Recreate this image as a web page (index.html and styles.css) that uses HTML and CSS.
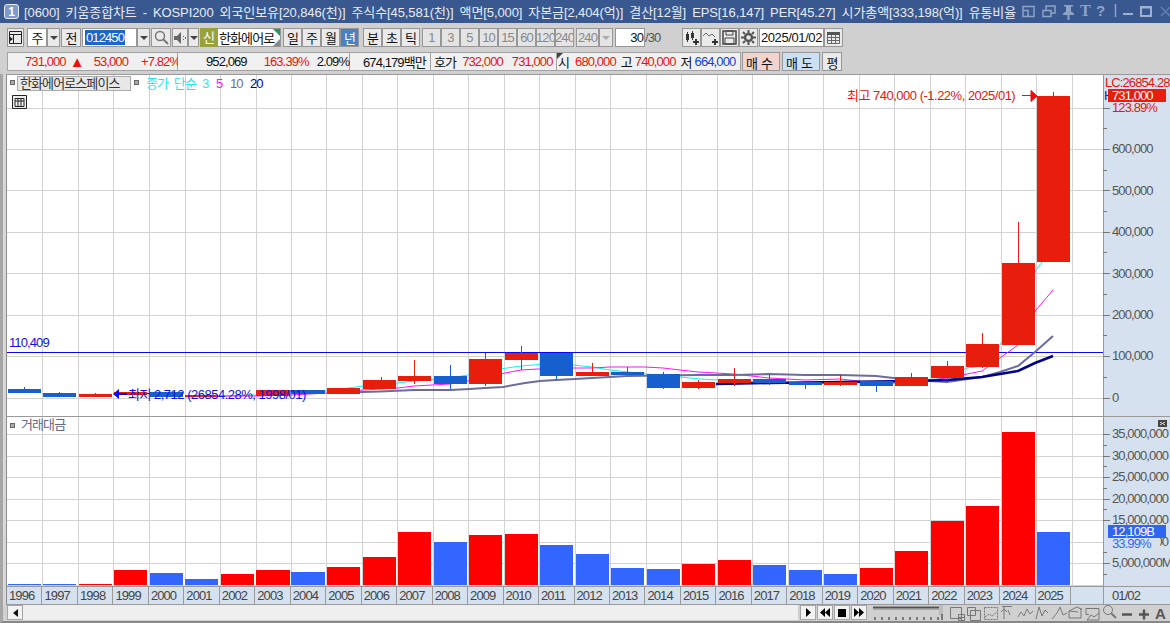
FILE: index.html
```html
<!DOCTYPE html>
<html lang="ko">
<head>
    <meta charset="UTF-8">
    <title>키움종합차트</title>
    <link rel="stylesheet" href="styles.css">
</head>
<body>
<div class="titlebar">
    <span class="appicon">1</span>
    <div class="titletext">[0600] 키움종합차트 - KOSPI200 외국인보유[20,846(천)] 주식수[45,581(천)] 액면[5,000] 자본금[2,404(억)] 결산[12월] EPS[16,147] PER[45.27] 시가총액[333,198(억)] 유통비율</div>
    <svg class="winbtns" width="150" height="23" viewBox="1020 0 150 23">
        <path class="wb" d="M1023 6.500h11v10h-11zM1023 10.500h5v6M1043 10.500h8v6h-8zM1046 10v-4h9v7h-4"/>
        <path class="wbf" d="M1064 5h9v1.500h-2v5l3 2v1.500h-4.500v5h-2v-5h-4.500v-1.500l3-2v-5h-2z"/>
        <text class="wbt" x="1080" y="16">T</text>
        <text class="wbq" x="1096" y="16">?</text>
        <path class="wb" d="M1115.500 4v13"/>
        <path class="wb2" d="M1123 14h10M1141 7h10v9h-10zM1141 7.500h10"/>
        <path class="wb3" d="M1161 7l9 9M1170 7l-9 9"/>
    </svg>
</div>

<div class="toolbar">
    <button class="btn w17 ml7"><svg width="13" height="13" viewBox="0 0 13 13"><path d="M.5.500h12v12H.5zM.5 3.500h12M4.500 3.500v9" fill="none" stroke="#222"/><path d="M0 5l4 3-4 3z" fill="#222"/></svg></button>
    <span class="field w20 ml3 center">주</span>
    <button class="btn w13"><i class="down"></i></button>
    <button class="btn w20 ml1">전</button>
    <span class="field code ml1"><b>012450</b></span>
    <button class="btn w13"><i class="down"></i></button>
    <button class="btn w20 ml1"><svg width="15" height="15" viewBox="0 0 15 15"><circle cx="6" cy="6" r="4.500" fill="none" stroke="#777" stroke-width="1.500"/><path d="M9 9l5 5" stroke="#777" stroke-width="2"/></svg></button>
    <button class="btn w16 ml1"><svg width="12" height="12" viewBox="0 0 12 12"><path d="M0 4h3l4-4v12l-4-4H0z" fill="#666"/><path d="M9 4h1v1H9zM9 7h1v1H9zM11 5h1v2h-1z" fill="#666"/></svg></button>
    <button class="btn w11"><i class="down"></i></button>
    <span class="sin ml1">신</span>
    <span class="field name">한화에어로<i class="corner-g"></i><i class="corner-k"></i></span>
    <button class="btn w19 ml2">일</button>
    <button class="btn w19">주</button>
    <button class="btn w19">월</button>
    <button class="btn w19 on">년</button>
    <button class="btn w19 ml4">분</button>
    <button class="btn w19">초</button>
    <button class="btn w19">틱</button>
    <button class="btn w19 ml2 off">1</button>
    <button class="btn w19 off">3</button>
    <button class="btn w19 off">5</button>
    <button class="btn w19 off">10</button>
    <button class="btn w19 off">15</button>
    <button class="btn w19 off">60</button>
    <button class="btn w19 off">120</button>
    <button class="btn w19 off">240</button>
    <span class="field fld240 ml2 off">240</span>
    <button class="btn w14 off"><i class="down pale"></i></button>
    <span class="field cnt ml2">30</span>
    <span class="cnt2">/30</span>
    <button class="btn w19 ml17"><svg width="15" height="14" viewBox="0 0 15 14"><path d="M2 3h3v6H2zM7 2h3v5H7z" fill="#333"/><path d="M3.500 1v10M8.500 0v9" stroke="#333"/><path d="M12 8v6M9 11h6" stroke="#333" stroke-width="2"/></svg></button>
    <button class="btn w19"><svg width="15" height="14" viewBox="0 0 15 14"><path d="M0 5l3-3 3 3 3-2 3 3" fill="none" stroke="#666"/><path d="M12 8v6M9 11h6" stroke="#333" stroke-width="2"/></svg></button>
    <button class="btn w19"><svg width="15" height="15" viewBox="0 0 15 15"><path d="M1 1h13v13H1z" fill="none" stroke="#444" stroke-width="1.500"/><path d="M4 1h7v4H4zM3 8h9v6H3z" fill="none" stroke="#444"/></svg></button>
    <button class="btn w19"><svg width="15" height="15" viewBox="0 0 15 15"><circle cx="7.500" cy="7.500" r="3.500" fill="none" stroke="#555" stroke-width="2.500"/><path d="M7.500 0v3M7.500 12v3M0 7.500h3M12 7.500h3M2 2l2 2M11 11l2 2M13 2l-2 2M4 11l-2 2" stroke="#555" stroke-width="2"/></svg></button>
    <span class="field date ml1">2025/01/02</span>
    <button class="btn w19"><svg width="13" height="12" viewBox="0 0 13 12"><path d="M.5 2.500h12v9H.5zM.5 5.500h12M.5 8.500h12M4.500 3v8M8.500 3v8" fill="none" stroke="#666"/><path d="M0 0h13v3H0z" fill="#555"/></svg></button>
</div>

<div class="quotes">
    <div class="cell c1"><span class="red">731,000</span><span class="red tri">▲</span><span class="red m10">53,000</span><span class="red m13">+7.82%</span></div>
    <div class="cell c2"><span>952,069</span><span class="red m17">163.39%</span><span class="m8">2.09%</span></div>
    <div class="cell c3"><span>674,179백만</span></div>
    <div class="cell c4"><span>호가</span><span class="red m6">732,000</span><span class="red m9">731,000</span></div>
    <div class="cell c5"><i class="mark"></i><span>시</span><span class="red m6">680,000</span><span class="m5">고</span><span class="red m3">740,000</span><span class="m5">저</span><span class="blue m3">664,000</span></div>
    <button class="order buy">매수</button>
    <button class="order sell">매도</button>
    <button class="order flat">평</button>
</div>

<div class="chart">
    <div class="plots">
        <svg class="panel main" width="1096" height="342" viewBox="7 74 1096 342">
            <path class="grid" d="M42.500 74v342M78.500 74v342M113.500 74v342M149.500 74v342M185.500 74v342M220.500 74v342M256.500 74v342M291.500 74v342M326.500 74v342M362.500 74v342M397.500 74v342M433.500 74v342M468.500 74v342M504.500 74v342M539.500 74v342M575.500 74v342M610.500 74v342M646.500 74v342M681.500 74v342M717.500 74v342M752.500 74v342M788.500 74v342M823.500 74v342M859.500 74v342M894.500 74v342M930.500 74v342M965.500 74v342M1001.500 74v342M1036.500 74v342M1072.500 74v342"/>
            <path class="grid" d="M7 108.500h1096M7 149.500h1096M7 190.500h1096M7 232.500h1096M7 273.500h1096M7 315.500h1096M7 356.500h1096M7 398.500h1096"/>
            <path class="frame" d="M7 74.500h1096"/>
            <path class="hline" d="M7 352.500h1096"/>
            <text class="t blue" x="9" y="347">110,409</text>
            <polyline class="ma3" points="185,397 220,396 256,395 291,393 327,391 363,386 398,383 414,381 450,378 485,372 500,369 521,366 545,364 573,365 592,367 610,370 646,374 680,377 700,379 734,381 769,382 805,383 840,383 876,383 911,381 947,378 967,368 990,365 1000,345 1018,310 1036,270 1042,262"/>
            <polyline class="ma5" points="220,396 256,396 291,395 327,393 363,390 398,388 414,386 450,384 485,378 505,373 521,370 556,368 592,368 610,367 645,367 663,368 680,370 698,372 734,374 769,378 805,380 840,379 876,383 911,383 947,378 982,371 1018,345 1036,310 1053,290"/>
            <polyline class="ma10" points="343,393 362,392 380,391.500 414,390 450,390 470,389 485,388 503,387 525,383 540,381 556,380 575,379 592,378 627,376 663,375.500 698,375 734,375 769,374 805,375 840,375 876,376 911,380 947,382 982,377 1000,372 1018,366 1035,352 1053,336"/>
            <polyline class="ma20" points="716,384 769,383 805,382.500 840,382 876,381.500 911,381 947,380 982,377 1000,374 1018,371 1035,363 1053,356"/>
            <path class="wick-r" d="M95.500 393v1M414.500 360v24M485.500 353v33M521.500 346v24M592.500 363v13M698.500 380v9M734.500 368v18M840.500 375v11M911.500 373v5M947.500 361v19M982.500 333v35M1018.500 222v42M1053.500 92v5M381.500 377v4"/>
            <path class="wick-b" d="M24.500 387v3M59.500 392v2M450.500 365v24M556.500 375v4M627.500 367v6M663.500 372v17M769.500 375v10M805.500 384v5M876.500 385v7"/>
            <path class="body-b" d="M8 389h33v4h-33zM43 393h33v4h-33zM150 392h33v5h-33zM291 390h34v4h-34zM434 376h33v8h-33zM540 353h33v23h-33zM611 372h33v3h-33zM647 374h33v14h-33zM753 379h33v4h-33zM789 382h33v3h-33zM860 381h33v5h-33z"/>
            <path class="body-r" d="M79 394h33v3h-33zM114 392h33v3h-33zM185 395h33v2h-33zM256 390h34v6h-34zM327 388h33v6h-33zM363 380h33v9h-33zM398 376h33v5h-33zM469 359h33v25h-33zM505 353h33v7h-33zM576 372h33v4h-33zM682 382h33v6h-33zM718 379h33v4h-33zM824 382h33v3h-33zM895 377h33v9h-33zM931 366h33v12h-33zM966 344h33v23h-33zM1002 263h33v82h-33zM1037 96h33v166h-33z"/>
            <path class="low" d="M113 394l6-5v4h8v2h-8v4z"/>
            <text class="t ann blue" x="128" y="399">최저 2,712 (26854.28%, 1998/01)</text>
            <text class="t ann red" x="847" y="100">최고 740,000 (-1.22%, 2025/01)</text>
            <path class="hi" d="M1022 95.500h9M1037 96l-6-5.500v11z"/>
            <rect class="dot" x="10.500" y="80.500" width="4" height="4"/>
            <rect class="legend-box" x="17.500" y="76.500" width="113" height="14"/>
            <text class="t dark" x="20" y="88">한화에어로스페이스</text>
            <rect class="dot" x="134.500" y="80.500" width="4" height="4"/>
            <text class="t cyan" x="146" y="88">종가 단순</text>
            <text class="t cyan" x="202" y="88">3</text>
            <text class="t magenta" x="216" y="88">5</text>
            <text class="t slate" x="230" y="88">10</text>
            <text class="t navy" x="250" y="88">20</text>
            <path class="tbl" d="M12.500 95.500h14v13h-14zM15 98.500h9v8h-9zM18 98v8M21 98v8M15 101h9"/>
        </svg>
        <svg class="panel vol" width="1096" height="170" viewBox="7 416 1096 170">
            <path class="grid" d="M42.500 416v170M78.500 416v170M113.500 416v170M149.500 416v170M185.500 416v170M220.500 416v170M256.500 416v170M291.500 416v170M326.500 416v170M362.500 416v170M397.500 416v170M433.500 416v170M468.500 416v170M504.500 416v170M539.500 416v170M575.500 416v170M610.500 416v170M646.500 416v170M681.500 416v170M717.500 416v170M752.500 416v170M788.500 416v170M823.500 416v170M859.500 416v170M894.500 416v170M930.500 416v170M965.500 416v170M1001.500 416v170M1036.500 416v170M1072.500 416v170"/>
            <path class="grid" d="M7 434.500h1096M7 456.500h1096M7 477.500h1096M7 499.500h1096M7 520.500h1096M7 542.500h1096M7 563.500h1096M7 585.500h1096"/>
            <path class="frame" d="M7 416.500h1096"/>
            <path class="vb" d="M8 584h33v1h-33zM43 584h33v1h-33zM150 573h33v12h-33zM185 579h33v6h-33zM291 572h34v13h-34zM434 542h33v43h-33zM540 545h33v40h-33zM576 554h33v31h-33zM611 568h33v17h-33zM647 569h33v16h-33zM753 565h33v20h-33zM789 570h33v15h-33zM824 574h33v11h-33zM1037 532h33v53h-33z"/>
            <path class="vr" d="M79 584h33v1h-33zM114 570h33v15h-33zM221 574h33v11h-33zM256 570h34v15h-34zM327 567h33v18h-33zM363 557h33v28h-33zM398 532h33v53h-33zM469 535h33v50h-33zM505 534h33v51h-33zM682 564h33v21h-33zM718 560h33v25h-33zM860 568h33v17h-33zM895 551h33v34h-33zM931 521h33v64h-33zM966 506h33v79h-33zM1002 432h33v153h-33z"/>
            <rect class="dot" x="10.500" y="423.500" width="4" height="4"/>
            <text class="t vol-name" x="21" y="429">거래대금</text>
        </svg>
        <div class="years">
            <span>1996</span><span>1997</span><span>1998</span><span>1999</span><span>2000</span><span>2001</span><span>2002</span><span>2003</span><span>2004</span><span>2005</span><span>2006</span><span>2007</span><span>2008</span><span>2009</span><span>2010</span><span>2011</span><span>2012</span><span>2013</span><span>2014</span><span>2015</span><span>2016</span><span>2017</span><span>2018</span><span>2019</span><span>2020</span><span>2021</span><span>2022</span><span>2023</span><span>2024</span><span>2025</span><span></span>
        </div>
    </div>
    <div class="axis">
        <svg class="panel" width="67" height="342" viewBox="1103 74 67 342">
            <path class="frame" d="M1103 74.500h67M1103.500 74v342"/>
            <path class="tick" d="M1103 108.500h7M1103 149.500h7M1103 190.500h7M1103 232.500h7M1103 273.500h7M1103 315.500h7M1103 356.500h7M1103 398.500h7M1103 128.500h4M1103 170.500h4M1103 211.500h4M1103 252.500h4M1103 294.500h4M1103 335.500h4M1103 377.500h4"/>
            <text class="t gray" x="1112" y="153">600,000</text>
            <text class="t gray" x="1112" y="195">500,000</text>
            <text class="t gray" x="1112" y="236">400,000</text>
            <text class="t gray" x="1112" y="278">300,000</text>
            <text class="t gray" x="1112" y="319">200,000</text>
            <text class="t gray" x="1112" y="360">100,000</text>
            <text class="t gray" x="1112" y="402">0</text>
            <text class="t red" x="1105" y="87">LC:26854.28</text>
            <text class="t blue" x="1104" y="100">H</text>
            <rect class="tag-r" x="1108" y="89" width="58" height="13"/>
            <text class="t white" x="1112" y="100">731,000</text>
            <text class="t red" x="1112" y="112">123.89%</text>
        </svg>
        <svg class="panel" width="67" height="170" viewBox="1103 416 67 170">
            <path class="frame" d="M1103 416.500h67M1103.500 416v170"/>
            <path class="tick" d="M1103 434.500h7M1103 456.500h7M1103 477.500h7M1103 499.500h7M1103 520.500h7M1103 563.500h7M1103 445.500h4M1103 466.500h4M1103 488.500h4M1103 509.500h4M1103 552.500h4M1103 574.500h4"/>
            <path class="xbox" d="M1158 420h9v7h-9z"/>
            <path class="xmark" d="M1160 422l5 3M1165 422l-5 3"/>
            <text class="t gray" x="1112" y="438">35,000,000</text>
            <text class="t gray" x="1112" y="460">30,000,000</text>
            <text class="t gray" x="1112" y="481">25,000,000</text>
            <text class="t gray" x="1112" y="503">20,000,000</text>
            <text class="t gray" x="1112" y="524">15,000,000</text>
            <text class="t gray" x="1112" y="546">10,000,000</text>
            <rect class="tag-b" x="1108" y="525" width="58" height="13"/>
            <rect class="tag-mask" x="1108" y="538" width="52" height="9"/>
            <text class="t white" x="1112" y="536">12,109B</text>
            <text class="t vblue" x="1112" y="548">33.99%</text>
            <text class="t gray" x="1112" y="567">5,000,000M</text>
        </svg>
        <div class="axis-date">01/02</div>
    </div>
</div>

<div class="bottom">
    <button class="bbtn w16 ml4"><i class="left"></i></button>
    <div class="track"></div>
    <button class="bbtn w16 ml2"><svg width="8" height="9" viewBox="0 0 8 9"><path d="M2 0l5 4.500-5 4.500z"/></svg></button>
    <button class="bbtn w16 ml1"><svg width="10" height="9" viewBox="0 0 10 9"><path d="M5 0L0 4.500 5 9zM10 0L5 4.500 10 9z"/></svg></button>
    <button class="bbtn w16 ml1"><svg width="8" height="8" viewBox="0 0 8 8"><path d="M0 0h8v8H0z"/></svg></button>
    <button class="bbtn w16 ml1"><svg width="10" height="9" viewBox="0 0 10 9"><path d="M0 0l5 4.500L0 9zM5 0l5 4.500L5 9z"/></svg></button>
    <svg class="slider" width="72" height="16" viewBox="0 0 72 16"><path d="M0 2.500h68" stroke="#555" stroke-width="2"/><path d="M0 4.500h68" stroke="#aaa"/><path d="M66 0h4v10h-4z" fill="#bbb"/><path d="M2 12v3M9 12v3M16 12v3M23 12v3M30 12v3M37 12v3M44 12v3M51 12v3M58 12v3M65 12v3M69 9v6" stroke="#222"/></svg>
    <svg class="tools" width="220" height="16" viewBox="950 605 220 16">
        <g class="ti">
            <path d="M950.500 607.500h11v11h-11zM958.500 614.500h6v6h-6zM961.500 614v6M958 617.500h6"/>
            <path d="M967.500 607.500h8v8h-8zM970.500 610.500h10v10h-10z"/>
            <path stroke-dasharray="2 1" d="M984.500 607.500h13v12h-13zM985 617l4-3 3 2 5-4"/>
            <path d="M1002 606.500h10M1004 606v13M1004 609l-3 3M1004 609l3 3M1010 615l-2-5"/>
            <path d="M1018 617l3-5 3 4 3-7 3 5 3-3"/>
            <path d="M1036 619l3-12 3 9 3-6 3 3"/>
            <path d="M1052 619l5-6 3-6 3 8 4-2"/>
            <path d="M1069 611l8-4 4 2v9h-12zM1069 611l9 1M1081 610v-2"/>
            <path d="M1086 608.500h13v5M1086 608.500v6h3M1087 620l4-5 3 2 5-4v7h-12z"/>
            <circle cx="1108" cy="610" r="4.500"/>
            <path d="M1111 613l5 5" stroke-width="2"/>
            <path d="M1122 614.500h10M1139 614.500h10M1144 609.500v10" stroke="#555" stroke-width="2.500"/>
        </g>
        <text class="a" x="1155" y="619">A</text>
    </svg>
</div>
</body>
</html>
```

FILE: styles.css
```css
html, body {
    margin: 0;
    padding: 0;
    width: 1170px;
    height: 623px;
    overflow: hidden;
    background: #d0d0d0;
    font-family: "Liberation Sans", "Noto Sans CJK KR", sans-serif;
    font-size: 13px;
    letter-spacing: -.9px;
    color: #111;
}

button {
    font: inherit;
    letter-spacing: inherit;
    color: inherit;
    padding: 0;
    margin: 0;
}

/* title bar */
.titlebar {
    display: flex;
    align-items: center;
    height: 23px;
    background: #3a5890;
    color: #e6ebf4;
}

.appicon {
    display: flex;
    align-items: center;
    justify-content: center;
    box-sizing: border-box;
    width: 15px;
    height: 15px;
    margin-left: 4px;
    border: 1px solid #e6ebf4;
    border-radius: 3px;
    background: #7d9ccc;
    color: #fff;
    font-size: 12px;
    font-weight: bold;
    letter-spacing: 0;
}

.titletext {
    width: 993px;
    margin-left: 5px;
    white-space: nowrap;
    overflow: hidden;
    word-spacing: 2.500px;
    letter-spacing: -.1px;
}

.winbtns { flex: none; margin-left: 3px; }
.wb { fill: none; stroke: #8ea3c8; stroke-width: 1.500; }
.wb2 { fill: none; stroke: #9fb1d2; stroke-width: 2; }
.wb3 { fill: none; stroke: #667fae; stroke-width: 1.500; }
.wbf { fill: #8ea3c8; }
.wbt, .wbq { fill: #8ea3c8; font-family: "Liberation Serif", serif; font-size: 16px; font-weight: bold; }
.wbq { font-family: "Liberation Sans", sans-serif; font-size: 15px; }

/* toolbar */
.toolbar {
    display: flex;
    height: 19px;
    margin-top: 5px;
}

.btn {
    display: flex;
    flex: none;
    align-items: center;
    justify-content: center;
    box-sizing: border-box;
    height: 19px;
    border: 1px solid #979797;
    background: #eaeaea;
    white-space: nowrap;
    overflow: hidden;
}

.btn.on { background: #4a80c4; color: #fff; }
.btn.off { color: #888; background: #e4e4e4; }

.field {
    display: flex;
    flex: none;
    align-items: center;
    box-sizing: border-box;
    height: 19px;
    border: 1px solid #979797;
    background: #fff;
    position: relative;
}

.field.off { background: #e4e4e4; color: #888; justify-content: center; }
.center { justify-content: center; }
.code { width: 55px; padding-left: 2px; }
.code b { font-weight: normal; background: #1a66cc; color: #fff; padding: 0 1px; }
.name { width: 64px; padding-left: 1px; overflow: hidden; white-space: nowrap; }
.fld240 { width: 23px; }
.cnt { width: 30px; justify-content: flex-end; padding-right: 1px; }
.cnt2 { width: 20px; line-height: 19px; color: #555; }
.date { width: 65px; justify-content: center; letter-spacing: -.4px; }

.sin {
    flex: none;
    width: 17px;
    height: 19px;
    background: #98a13c;
    color: #fff;
    text-align: center;
    line-height: 19px;
}

.corner-g, .corner-k {
    position: absolute;
    right: 0;
    width: 0;
    height: 0;
    border-style: solid;
}
.corner-g { top: 0; border-width: 0 7px 7px 0; border-color: transparent #1f9a58 transparent transparent; }
.corner-k { bottom: 0; border-width: 0 0 7px 7px; border-color: transparent transparent #888 transparent; }

.down {
    display: block;
    width: 0;
    height: 0;
    border-left: 4px solid transparent;
    border-right: 4px solid transparent;
    border-top: 4px solid #444;
}
.down.pale { border-top-color: #aaa; }

.w11 { width: 11px; }
.w13 { width: 13px; }
.w14 { width: 14px; }
.w16 { width: 16px; }
.w17 { width: 17px; }
.w19 { width: 19px; }
.w20 { width: 20px; }
.ml1 { margin-left: 1px; }
.ml2 { margin-left: 2px; }
.ml3 { margin-left: 3px; }
.ml4 { margin-left: 4px; }
.ml7 { margin-left: 7px; }
.ml17 { margin-left: 17px; }

/* quote row */
.quotes {
    display: flex;
    height: 19px;
    margin: 5px 0 3px 7px;
}

.cell {
    display: flex;
    align-items: center;
    box-sizing: border-box;
    height: 19px;
    border: 1px solid #a2a2a2;
    border-left-width: 0;
    background: #f0f0f0;
    white-space: nowrap;
    position: relative;
}

.c1 { width: 171px; padding-left: 17px; border-left-width: 1px; }
.c2 { width: 172px; padding-left: 28px; }
.c3 { width: 81px; padding-left: 13px; }
.c4 { width: 126px; padding-left: 3px; }
.c5 { width: 184px; padding-left: 1px; }

.red { color: #e8140c; fill: #e8140c; }
.blue { color: #1540d8; fill: #1010e0; }
.tri { margin-left: 4px; font-size: 15px; }
.m3 { margin-left: 3px; }
.m5 { margin-left: 5px; }
.m6 { margin-left: 6px; }
.m8 { margin-left: 8px; }
.m9 { margin-left: 9px; }
.m10 { margin-left: 10px; }
.m13 { margin-left: 13px; }
.m17 { margin-left: 17px; }

.mark {
    position: absolute;
    left: 0;
    top: 0;
    border-style: solid;
    border-width: 6px 6px 0 0;
    border-color: #444 transparent transparent transparent;
}

.order {
    flex: none;
    box-sizing: border-box;
    height: 19px;
    margin-left: 1px;
    border: 1px solid #979797;
}
.buy { width: 38px; background: #f3d3cc; letter-spacing: 3px; }
.sell { width: 38px; margin-left: 2px; background: #cce0f4; letter-spacing: 3px; }
.flat { width: 20px; margin-left: 2px; background: #eaeaea; }

/* chart */
.chart {
    display: flex;
    height: 531px;
    border-left: 3px solid #a6a6a6;
    padding-left: 4px;
    background: #d8d8d8;
}

.plots { width: 1096px; box-shadow: -1px 0 #8c8c8c; }
.panel { display: block; background: #fff; }
.axis .panel { background: #d5e1ef; }

.axis {
    width: 67px;
    background: #d5e1ef;
}

.grid { fill: none; stroke: #d2d2d2; }
.frame { fill: none; stroke: #999; }
.hline { fill: none; stroke: #0808f0; }
.t { font-family: "Liberation Sans", "Noto Sans CJK KR", sans-serif; font-size: 13px; letter-spacing: -.9px; }
.t.ann { letter-spacing: -.5px; }
.dark { fill: #333; }
.gray { fill: #555; }
.white { fill: #fff; }
.cyan { fill: #1fe8f0; word-spacing: 3px; }
.magenta { fill: #ff10ff; }
.slate { fill: #6a6a9e; }
.navy { fill: #000090; }
.vol-name { fill: #66668a; }
.vblue { fill: #3366ff; }
.a { fill: #555; font-family: "Liberation Sans", sans-serif; font-weight: bold; font-size: 15px; letter-spacing: 0; }

.ma3 { fill: none; stroke: #14f0f0; stroke-width: 1; }
.ma5 { fill: none; stroke: #ff10ff; stroke-width: 1; }
.ma10 { fill: none; stroke: #6c6c9c; stroke-width: 2; }
.ma20 { fill: none; stroke: #00008c; stroke-width: 2.500; }
.wick-r { fill: none; stroke: #e81e0c; }
.wick-b { fill: none; stroke: #1560cc; }
.body-r { fill: #e81e0c; }
.body-b { fill: #1560cc; }
.vr { fill: #ff0000; }
.vb { fill: #3366ff; }
.low { fill: #0808f0; }
.hi { fill: #ee0a0a; stroke: #ee0a0a; }

.dot { fill: #aaa; stroke: #666; }
.legend-box { fill: #e8e8e8; stroke: #aaa; }
.tbl { fill: #eee; stroke: #222; }
.tick { fill: none; stroke: #777; }
.tag-r { fill: #e81e0c; }
.tag-b { fill: #2f66f0; }
.tag-mask { fill: #d5e1ef; }
.xbox { fill: #444; }
.xmark { stroke: #ddd; }

.years {
    display: grid;
    grid-template-columns: repeat(31, 35.480px);
    height: 19px;
    border-top: 1px solid #9a9a9a;
    border-bottom: 1px solid #9a9a9a;
    box-sizing: border-box;
    background: #d5e1ef;
    overflow: hidden;
    color: #444;
}

.years span {
    box-sizing: border-box;
    padding-left: 2px;
    line-height: 17px;
    border-right: 1px solid #9a9a9a;
}

.axis-date {
    box-sizing: border-box;
    height: 19px;
    padding-left: 8px;
    line-height: 17px;
    color: #444;
    border-top: 1px solid #9a9a9a;
    border-bottom: 1px solid #9a9a9a;
    border-left: 1px solid #9a9a9a;
}

/* bottom */
.bottom {
    display: flex;
    height: 16px;
    border-left: 3px solid #a6a6a6;
    border-bottom: 2px solid #888;
}

.bbtn {
    display: flex;
    flex: none;
    align-items: center;
    justify-content: center;
    box-sizing: border-box;
    height: 15px;
    border: 1px solid #a6a6a6;
    background: #f2f2f2;
}

.left {
    display: block;
    border-style: solid;
    border-width: 4px 5px 4px 0;
    border-color: transparent #111 transparent transparent;
}

.track {
    flex: none;
    width: 775px;
    height: 15px;
    background: #efefef;
}

.slider { flex: none; margin-left: 6px; }
.tools { flex: none; margin-left: 5px; }
.ti { fill: none; stroke: #777; }
```
